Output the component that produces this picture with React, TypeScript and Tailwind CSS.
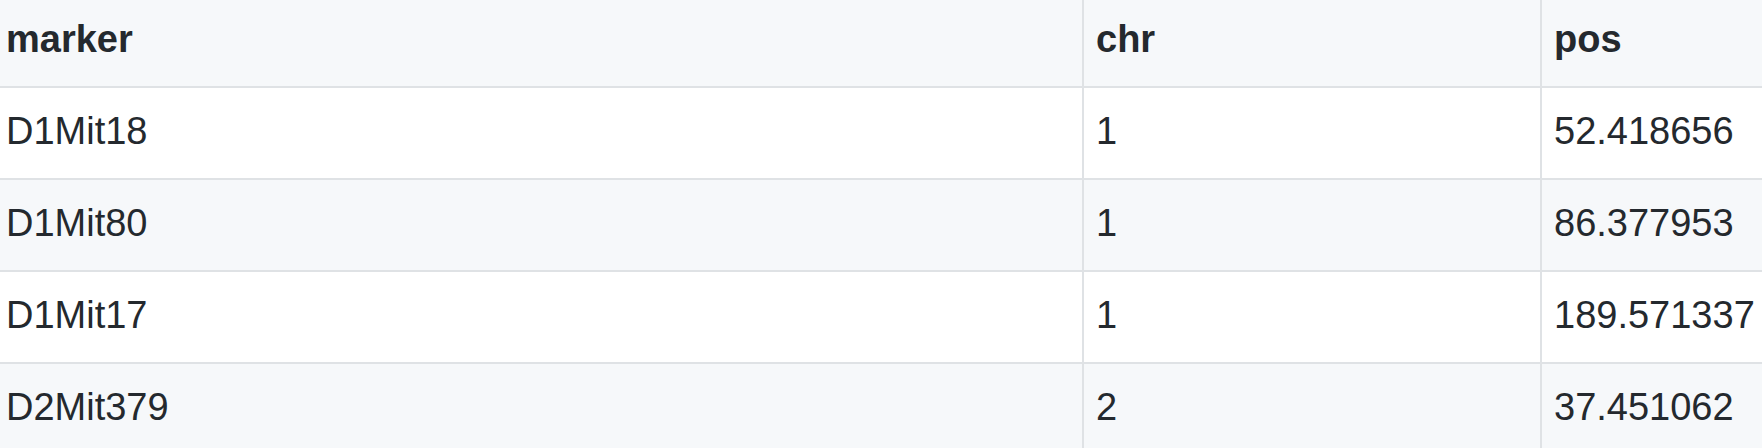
const rows = [
  ['D1Mit18', '1', '52.418656'],
  ['D1Mit80', '1', '86.377953'],
  ['D1Mit17', '1', '189.571337'],
  ['D2Mit379', '2', '37.451062'],
];

const cell = 'leading-[57px] whitespace-nowrap';

export default function App() {
  return (
    <div className="h-[448px] w-[1762px] overflow-hidden bg-white text-[38px] text-[#24292e] font-['Liberation_Sans',Arial,sans-serif]">
      {/* header row */}
      <div className="grid grid-cols-[1084px_458px_1fr] border-b-2 border-[#dfe2e5] bg-[#f6f8fa] font-bold">
        <div className={`${cell} border-r-2 border-[#dfe2e5] pl-[6px] pt-[11px] pb-[18px]`}>marker</div>
        <div className={`${cell} border-r-2 border-[#dfe2e5] pl-[12px] pt-[11px] pb-[18px]`}>chr</div>
        <div className={`${cell} pl-[12px] pt-[11px] pb-[18px]`}>pos</div>
      </div>
      {rows.map((r, i) => (
        <div
          key={r[0]}
          className={`grid grid-cols-[1084px_458px_1fr] border-b-2 border-[#dfe2e5] ${i % 2 === 1 ? 'bg-[#f6f8fa]' : 'bg-white'}`}
        >
          <div className={`${cell} border-r-2 border-[#dfe2e5] pl-[6px] pt-[15px] pb-[18px]`}>{r[0]}</div>
          <div className={`${cell} border-r-2 border-[#dfe2e5] pl-[12px] pt-[15px] pb-[18px]`}>{r[1]}</div>
          <div className={`${cell} pl-[12px] pt-[15px] pb-[18px]`}>{r[2]}</div>
        </div>
      ))}
    </div>
  );
}
